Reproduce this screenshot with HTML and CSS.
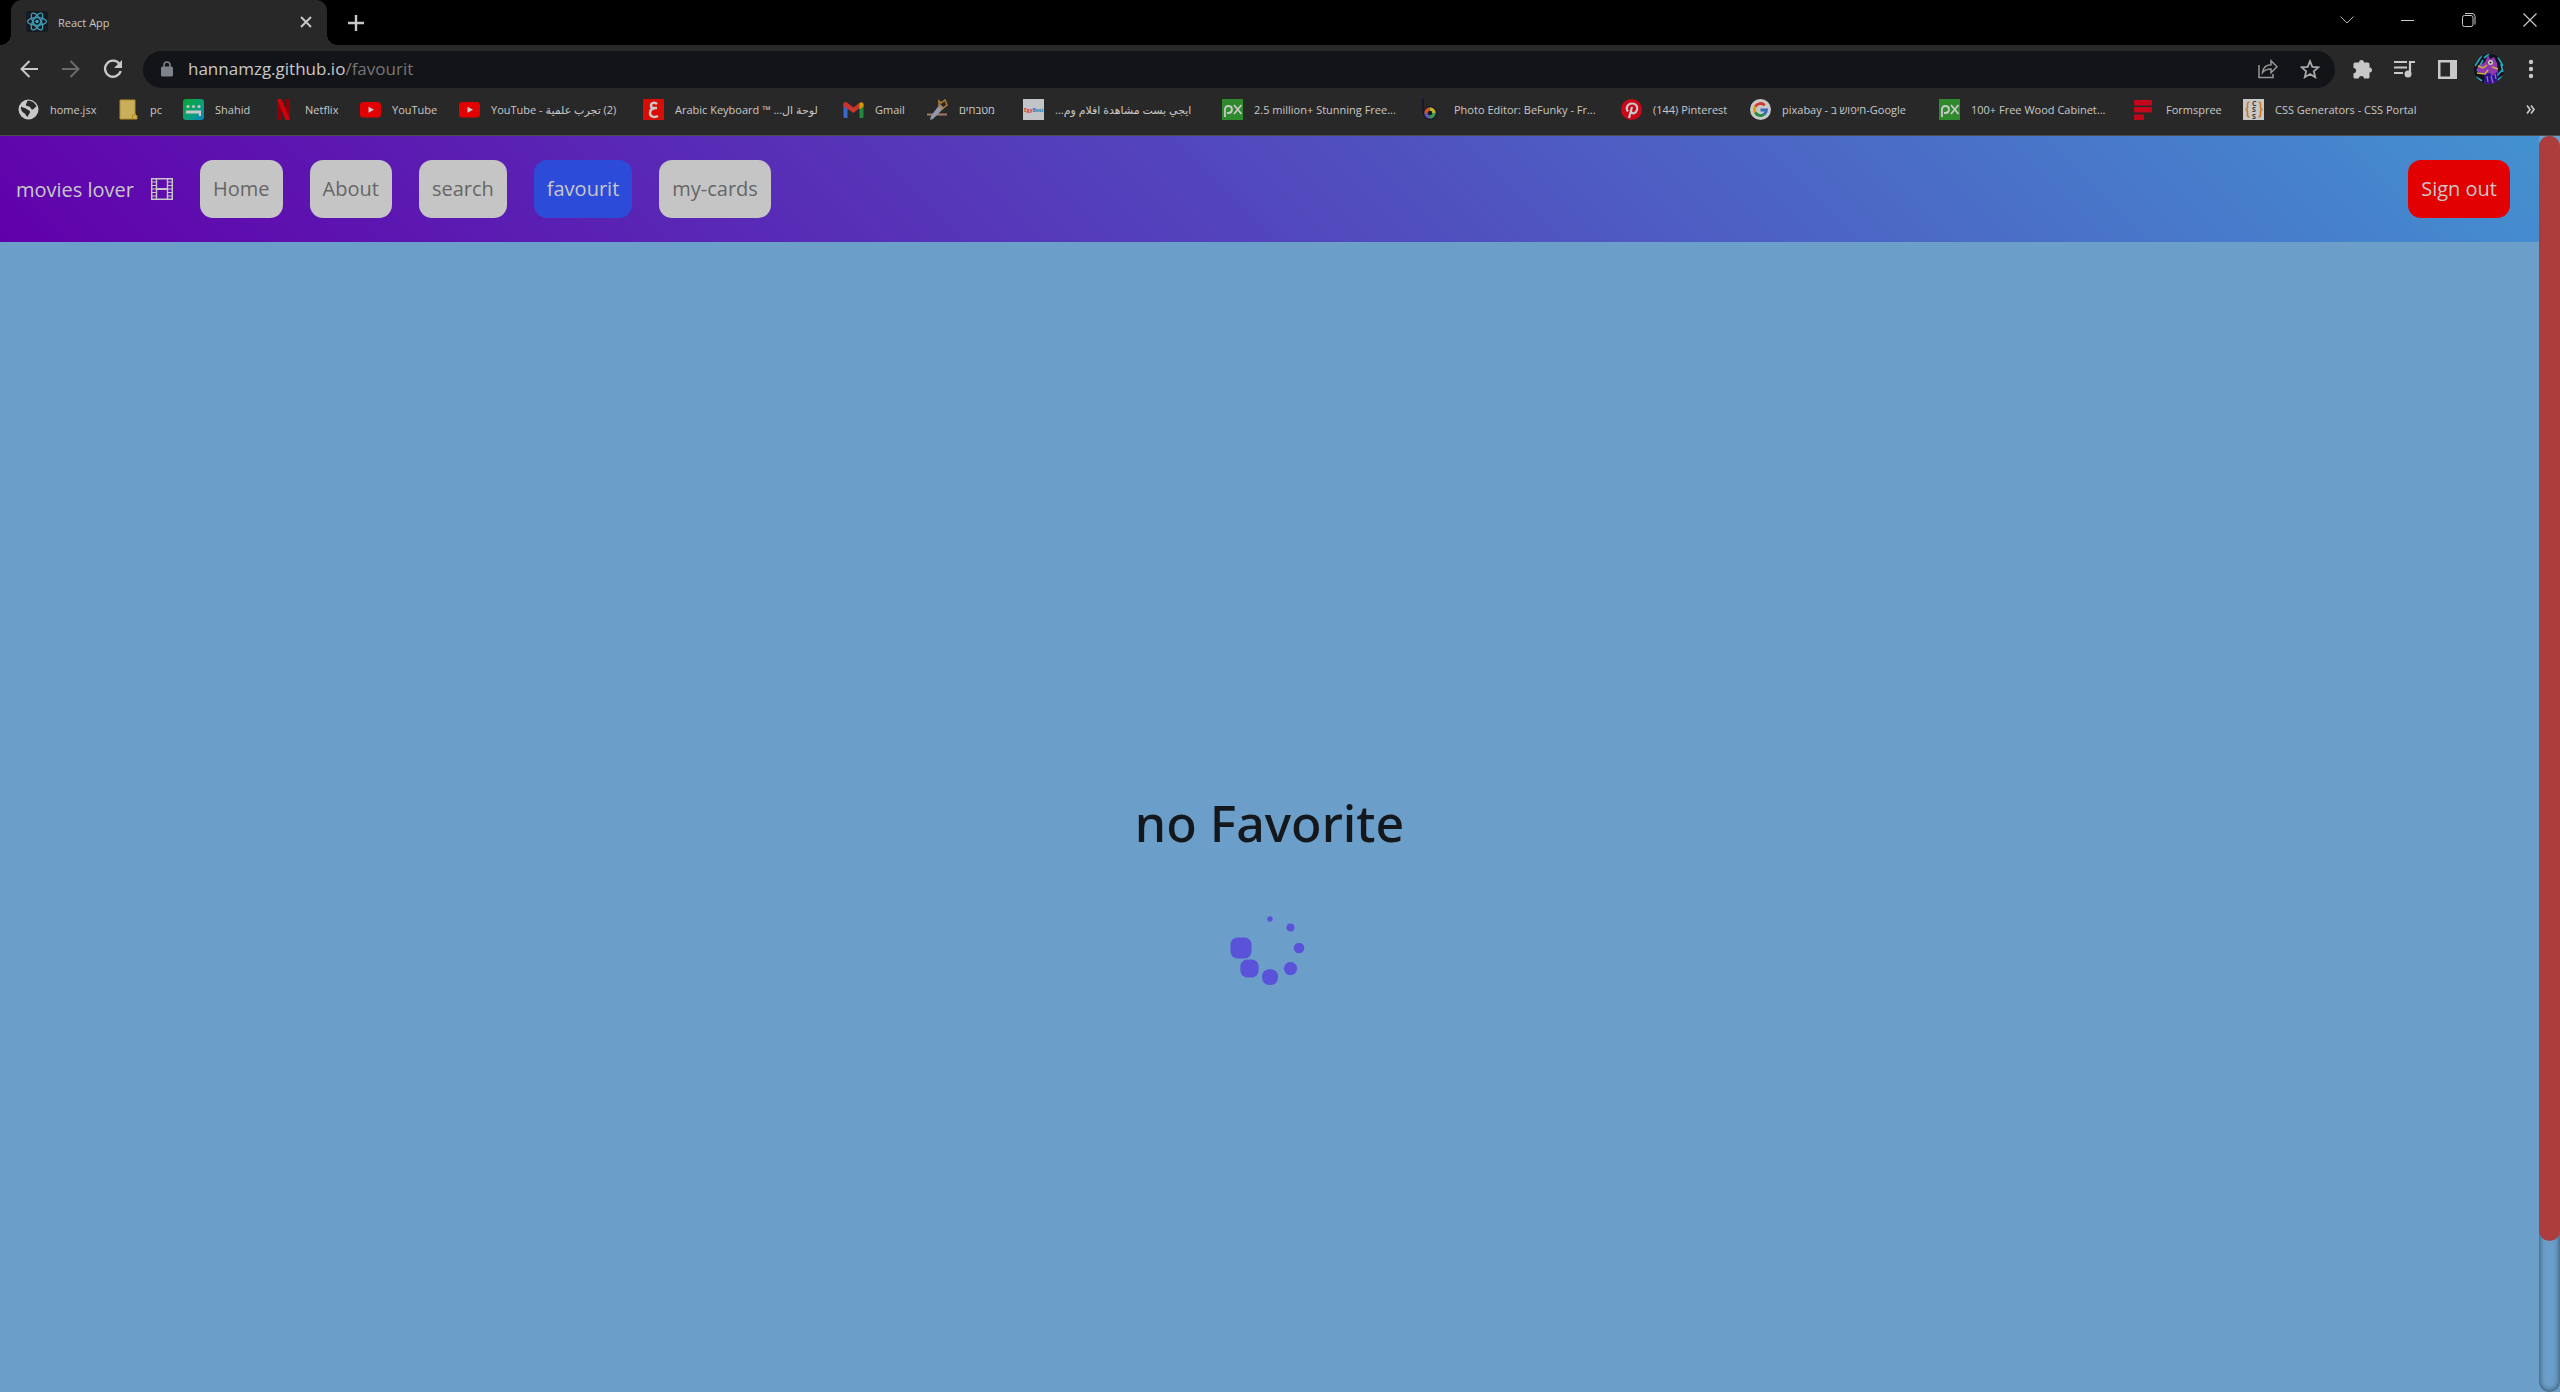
FILE: index.html
```html
<!DOCTYPE html>
<html lang="en">
<head>
<meta charset="utf-8">
<title>React App</title>
<link rel="stylesheet" href="styles.css">
</head>
<body>
<header class="browser">
  <div class="tabstrip">
    <div class="tab">
      <svg class="tab-icon" viewBox="0 0 22 22"><rect width="22" height="21" rx="2" fill="#171a1e"/><g fill="none" stroke="#3f9fbb" stroke-width="1.3"><ellipse cx="11" cy="10.5" rx="9.5" ry="3.8"/><ellipse cx="11" cy="10.5" rx="9.5" ry="3.8" transform="rotate(60 11 10.5)"/><ellipse cx="11" cy="10.5" rx="9.5" ry="3.8" transform="rotate(120 11 10.5)"/></g><circle cx="11" cy="10.5" r="1.8" fill="#3f9fbb"/></svg>
      <span class="tab-title">React App</span>
      <button class="icon-btn tab-close" aria-label="Close tab"><svg width="12" height="12" viewBox="0 0 12 12"><path d="M1 1l10 10M11 1L1 11" stroke="#c8c8c8" stroke-width="2"/></svg></button>
    </div>
    <button class="icon-btn new-tab" aria-label="New tab"><svg width="16" height="16" viewBox="0 0 16 16"><path d="M8 0v16M0 8h16" stroke="#c8c8c8" stroke-width="2.4"/></svg></button>
    <div class="window-controls">
      <button class="icon-btn" aria-label="Search tabs"><svg width="14" height="14" viewBox="0 0 14 14"><path d="M.5 3.500l6.500 6.500 6.500-6.500" fill="none" stroke="#b4b4b4"/></svg></button>
      <button class="icon-btn" aria-label="Minimize"><svg width="13" height="13" viewBox="0 0 13 13"><path d="M0 6.500h13" stroke="#c8c8c8"/></svg></button>
      <button class="icon-btn" aria-label="Restore"><svg width="14" height="14" viewBox="0 0 14 14"><g fill="none" stroke="#c8c8c8"><rect x=".5" y="2.500" width="10.500" height="11" rx="2"/><path d="M3 .5h7a3 3 0 0 1 3 3v8"/></g></svg></button>
      <button class="icon-btn" aria-label="Close"><svg width="14" height="14" viewBox="0 0 14 14"><path d="M.5.5l13 13M13.500.5l-13 13" stroke="#c8c8c8" stroke-width="1.200"/></svg></button>
    </div>
  </div>

  <div class="toolbar">
    <button class="icon-btn" aria-label="Back"><svg width="18" height="18" viewBox="0 0 18 18"><path d="M18 9H2M9.500 1L1.500 9l8 8" fill="none" stroke="#c8c8c8" stroke-width="2"/></svg></button>
    <button class="icon-btn" aria-label="Forward"><svg width="18" height="18" viewBox="0 0 18 18"><path d="M0 9h16M8.500 1l8 8-8 8" fill="none" stroke="#6b6b6b" stroke-width="2"/></svg></button>
    <button class="icon-btn" aria-label="Reload"><svg width="20" height="20" viewBox="0 0 20 20"><path d="M16.500 5A8 8 0 1 0 17.700 12" fill="none" stroke="#c8c8c8" stroke-width="2.300"/><path d="M19 1v8h-8z" fill="#c8c8c8"/></svg></button>
    <div class="omnibox">
      <svg class="lock" width="12" height="16" viewBox="0 0 12 16"><rect y="5.500" width="12" height="10" rx="1.500" fill="#7e828a"/><path d="M3 6.500V4a3 3 0 0 1 6 0v2.500" fill="none" stroke="#7e828a" stroke-width="1.600"/></svg>
      <div class="url" role="textbox" aria-label="Address" contenteditable="true" spellcheck="false">hannamzg.github.io<span class="url-path">/favourit</span></div>
      <button class="icon-btn" aria-label="Share"><svg width="20" height="20" viewBox="0 0 20 20"><g fill="none" stroke="#969696" stroke-width="1.500"><path d="M1 6v12.500h14V15"/><path d="M4.500 13.500c.5-4.500 3-7.500 8.500-7.800V1.800l6 6-6 6V10c-4 0-6.500 1-8.500 3.500z"/></g></svg></button>
      <button class="icon-btn" aria-label="Bookmark this page"><svg width="20" height="20" viewBox="0 0 20 20"><path d="M10 2.200l2.300 5.600 6 .5-4.500 4 1.400 5.900L10 15l-5.200 3.200 1.400-5.900-4.500-4 6-.5z" fill="none" stroke="#a8a8a8" stroke-width="1.800"/></svg></button>
    </div>
    <button class="icon-btn" aria-label="Extensions"><svg width="20" height="20" viewBox="0 0 20 20"><path d="M6 3.500a2.500 2.500 0 0 1 5 0h4a1.500 1.500 0 0 1 1.500 1.500v3.500a2.500 2.500 0 0 1 0 5V18a1.500 1.500 0 0 1-1.500 1.500h-4a2.600 2.600 0 0 0-5.200 0H2A1.500 1.500 0 0 1 .5 18v-3.800a2.600 2.600 0 0 0 0-5.200V5A1.500 1.500 0 0 1 2 3.500z" fill="#c8c8c8"/></svg></button>
    <button class="icon-btn" aria-label="Media controls"><svg width="22" height="18" viewBox="0 0 22 18"><path d="M0 2h13M0 7.500h13M0 13h9M16 14V2h5" fill="none" stroke="#c8c8c8" stroke-width="2.200"/><circle cx="14" cy="14" r="3.500" fill="#c8c8c8"/></svg></button>
    <button class="icon-btn" aria-label="Side panel"><svg width="19" height="19" viewBox="0 0 19 19"><path d="M0 0h19v19H0zM2.500 2.500v14H12v-14z" fill="#c8c8c8" fill-rule="evenodd"/></svg></button>
    <button class="icon-btn" aria-label="Profile"><svg width="30" height="30" viewBox="0 0 30 30"><defs><clipPath id="face"><circle cx="15" cy="15" r="15"/></clipPath></defs><g clip-path="url(#face)"><path fill="#101018" d="M0 0h30v30H0z"/><path d="M1 12L8 1M3 17L9 6M24 3l5 9M22 23l7-8M2 23l6 4M21 28l8-6M27 10l2 8M10 4l5-4" stroke="#28a6bd" stroke-width="1.800"/><path d="M10 30l2-10-9-2 1-5 7-5 3-7 2 4 4-2 3 6 1 9-3 12z" fill="#9137b2"/><path d="M11 30l-1-10 6-1 2 3 5-4 1 12z" fill="#2a148f"/><path d="M4 12l5 2 4-3M3 19l8 1 3-4M18 13l6 2" fill="none" stroke="#c9b43b" stroke-width="1.400"/><path d="M13 22l1 6M17 22l2 7M21 20l1 5" stroke="#b06ac8" stroke-width="1.200"/><circle cx="16.500" cy="8.500" r="2.500" fill="#d2d0b5"/><circle cx="16.500" cy="8.500" r="1" fill="#222"/></g></svg></button>
    <button class="icon-btn" aria-label="Menu"><svg width="6" height="20" viewBox="0 0 6 20"><g fill="#c8c8c8"><circle cx="3" cy="3" r="2.200"/><circle cx="3" cy="10" r="2.200"/><circle cx="3" cy="17" r="2.200"/></g></svg></button>
  </div>

  <nav class="bookmarks" aria-label="Bookmarks">
    <a href="#"><svg viewBox="0 0 21 21"><circle cx="10.500" cy="10.500" r="10" fill="#c8c8c8"/><path d="M3 7.500c2 1.500 4 1 5.500 2.500s3 1 3.500 2.500-2 3-2 5.500c-2-.5-2-3-4-4s-3.500-3.500-3-6.500zM9 2c4-1 8 1.500 9.500 5.500-2 1-3 3.500-4.500 3s-1-2.500-3-3-2.500 0-3-1.500S9.500 4 9 2z" fill="#282828"/></svg>home.jsx</a>
    <a href="#"><svg viewBox="0 0 21 21"><path d="M2 1h15v14l2 2v3H2z" fill="#c9ae5c" stroke="#b08e2c"/><path d="M14.500 20v-4h3" fill="none" stroke="#b58a1d"/></svg>pc</a>
    <a href="#"><svg viewBox="0 0 21 21"><defs><linearGradient id="sh" x1="0" y1="0" x2="1" y2="1"><stop offset="0" stop-color="#0aa52f"/><stop offset=".6" stop-color="#0b9f7a"/><stop offset="1" stop-color="#087ed0"/></linearGradient></defs><rect width="21" height="21" rx="3" fill="url(#sh)"/><g fill="#c8c8c8"><circle cx="5" cy="7.500" r="1.500"/><circle cx="10.500" cy="7.500" r="1.500"/><circle cx="16" cy="7.500" r="1.500"/><path d="M3 11.500h15V17h-2.200v-2.500H3z"/></g></svg>Shahid</a>
    <a href="#"><svg viewBox="0 0 21 21"><path d="M4 0h4v21H4zM13 0h4v21h-4z" fill="#900008"/><path d="M4 0h4.500L17 21h-4.500z" fill="#d0000c"/></svg>Netflix</a>
    <a href="#"><svg viewBox="0 0 21 21"><rect y="3" width="21" height="15.500" rx="3.500" fill="#e30000"/><path d="M8.500 7.800l5.500 3-5.500 3z" fill="#c8c8c8"/></svg>YouTube</a>
    <a href="#"><svg viewBox="0 0 21 21"><rect y="3" width="21" height="15.500" rx="3.500" fill="#e30000"/><path d="M8.500 7.800l5.500 3-5.500 3z" fill="#c8c8c8"/></svg><bdi dir="ltr">YouTube - تجرب علمية&lrm; (2)</bdi></a>
    <a href="#"><svg viewBox="0 0 21 21"><path fill="#d80d05" d="M0 0h21v21H0z"/><path d="M14 5c-2-2-6-1.500-6 1.500S10 9 14 9c-4 0-7 1.500-7 5s4 5 8 3" fill="none" stroke="#c8c8c8" stroke-width="2.500"/></svg><bdi dir="ltr">Arabic Keyboard ™ ...لوحة ال</bdi></a>
    <a href="#"><svg viewBox="0 0 21 21"><path d="M.5 5h4v14H2a1.500 1.500 0 0 1-1.500-1.500z" fill="#3769c8"/><path d="M16.500 5h4v12.500A1.500 1.500 0 0 1 19 19h-2.500z" fill="#23893f"/><path d="M.5 7V5c0-2 2-2.500 3.500-1.500l6.500 5 6.500-5v5L10.500 14 .5 7z" fill="#c9352a"/><path d="M16.500 4c1.500-1.500 4-.5 4 1.500v2l-4 3z" fill="#cf9a04"/></svg>Gmail</a>
    <a href="#"><svg viewBox="0 0 21 21"><path d="M0 15.500h20" stroke="#a87962" stroke-width="2"/><path d="M13 5l4 4L6 20l-3 1 1-4z" fill="#9297aa"/><path d="M12 2l2 2 4-3 2 5-5 4-3-4z" fill="none" stroke="#b67c32" stroke-width="1.500"/></svg>מטבחים</a>
    <a href="#"><svg viewBox="0 0 21 21"><path fill="#c2c4c8" d="M0 0h21v21H0z"/><text x="1" y="13" class="egy" fill="#d83a25">Egy<tspan fill="#2577b9">Best</tspan></text></svg><bdi dir="rtl">ايجي بست مشاهدة افلام وم...</bdi></a>
    <a href="#"><svg viewBox="0 0 21 21"><path fill="#2e8a2d" d="M0 0h21v21H0z"/><path d="M3 18V10a3.500 3.500 0 1 1 3.500 4H5M12 6l7.500 9M19.500 6L12 15" fill="none" stroke="#c8c8c8" stroke-width="1.800"/></svg>2.5 million+ Stunning Free...</a>
    <a href="#"><svg viewBox="0 0 21 21"><path d="M1 0v14" stroke="#12132a" stroke-width="1.500"/><circle cx="8" cy="14" r="7" fill="#17172c"/><g fill="none" stroke-width="3.500"><path d="M8 10a4 4 0 0 1 4 4" stroke="#b9b62d"/><path d="M12 14a4 4 0 0 1-4 4" stroke="#3f9850"/><path d="M8 18a4 4 0 0 1-4-4" stroke="#6758b1"/><path d="M4 14a4 4 0 0 1 4-4" stroke="#d0562b"/></g></svg>Photo Editor: BeFunky - Fr...</a>
    <a href="#"><svg viewBox="0 0 21 21"><circle cx="10.500" cy="10.500" r="10.500" fill="#cc0719"/><path d="M7 12.500c-3-4 0-8 4-8s6 3 5 6.500-5 4.500-6 1.500M11 8L8 19" fill="none" stroke="#c8c8c8" stroke-width="2.200"/></svg>(144) Pinterest</a>
    <a href="#"><svg viewBox="0 0 21 21"><circle cx="10.500" cy="10.500" r="10.500" fill="#c8c8c8"/><g fill="none" stroke-width="2.800"><path d="M14.800 6.300A6 6 0 0 0 5.300 7.500" stroke="#d13b2e"/><path d="M5.300 7.500a6 6 0 0 0 0 6" stroke="#d5a106"/><path d="M5.300 13.500a6 6 0 0 0 9 1.700" stroke="#238941"/><path d="M14.300 15.200a6 6 0 0 0 2.200-4.200h-6" stroke="#3569c4"/></g></svg><bdi dir="ltr">pixabay - חיפוש ב-Google</bdi></a>
    <a href="#"><svg viewBox="0 0 21 21"><path fill="#2e8a2d" d="M0 0h21v21H0z"/><path d="M3 18V10a3.500 3.500 0 1 1 3.500 4H5M12 6l7.500 9M19.500 6L12 15" fill="none" stroke="#c8c8c8" stroke-width="1.800"/></svg>100+ Free Wood Cabinet...</a>
    <a href="#"><svg viewBox="0 0 21 21"><g fill="#c4061b"><rect y="1" width="18" height="5.500" rx="1"/><rect y="8" width="18" height="5.500" rx="1"/><rect y="15.500" width="10" height="5.500" rx="1"/></g></svg>Formspree</a>
    <a href="#"><svg viewBox="0 0 21 21"><path fill="#c8c8c8" d="M0 0h21v21H0z"/><path d="M6.500 3C4 3 4.500 5 4.500 8c0 2-1 2.500-2 2.500 1 0 2 .5 2 2.500 0 3-.5 5 2 5M15.500 3c2.500 0 2 2 2 5 0 2 1 2.500 2 2.500-1 0-2 .5-2 2.500 0 3 .5 5-2 5" fill="none" stroke="#cf7a1d" stroke-width="1.600"/><g class="css-mark"><text x="9" y="6.500">C</text><text x="9" y="13">S</text><text x="9" y="19.500">S</text></g></svg>CSS Generators - CSS Portal</a>
    <button class="icon-btn more" aria-label="More bookmarks"><svg width="9" height="9" viewBox="0 0 9 9"><path d="M1 .5l3 4-3 4M5 .5l3 4-3 4" fill="none" stroke="#c8c8c8" stroke-width="1.700"/></svg></button>
  </nav>
</header>

<div class="viewport">
  <div class="page">
    <nav class="navbar" aria-label="Main">
      <a class="brand" href="#">movies lover
        <svg width="22" height="22" viewBox="0 0 22 22"><g fill="none" stroke="#c8c8c8"><path d="M.7.7h20.600v20.600H.7zM5.500 1v20M16.500 1v20" stroke-width="1.400"/><path d="M5.500 11h11" stroke-width="2"/><path d="M1 4h4.500M1 7.500h4.500M1 11h4.500M1 14.500h4.500M1 18h4.500M16.500 4H21M16.500 7.500H21M16.500 11H21M16.500 14.500H21M16.500 18H21" stroke-width="1.200"/></g></svg>
      </a>
      <a class="nav-link" href="#">Home</a>
      <a class="nav-link" href="#">About</a>
      <a class="nav-link" href="#">search</a>
      <a class="nav-link active" href="#" aria-current="page">favourit</a>
      <a class="nav-link" href="#">my-cards</a>
      <a class="nav-link sign-out" href="#">Sign out</a>
    </nav>
    <main class="empty">
      <h1>no Favorite</h1>
      <svg class="spinner" width="90" height="70" viewBox="-45 -35 90 70" role="img" aria-label="Loading"><g fill="#5a52d8"><circle cy="-29" r="2.700"/><circle cx="20.500" cy="-20.500" r="4"/><circle cx="29" r="5.300"/><circle cx="20.500" cy="20.500" r="6.600"/><rect x="-7.900" y="21.200" width="15.800" height="15.800" rx="7"/><rect x="-29.600" y="11.400" width="18.200" height="18.200" rx="7"/><rect x="-39.500" y="-10.500" width="21" height="21" rx="7"/></g></svg>
    </main>
  </div>
  <div class="scrollbar"><div class="thumb"></div></div>
</div>
</body>
</html>
```
FILE: styles.css
```css
* { box-sizing: border-box; }

body {
  margin: 0;
  min-height: 100vh;
  display: flex;
  flex-direction: column;
  background: #6b9fca;
  color: #c8c8c8;
  font-family: "Open Sans", "Noto Sans", "DejaVu Sans", sans-serif;
}

a { color: inherit; text-decoration: none; }
svg { display: block; flex: none; }

.icon-btn {
  display: flex;
  align-items: center;
  justify-content: center;
  flex: none;
  width: 42px;
  height: 36px;
  padding: 0;
  border: 0;
  background: none;
}

/* Browser frame */
.browser { background: #282828; border-bottom: 1px solid #4b4b4b; }

.tabstrip {
  display: flex;
  align-items: flex-start;
  height: 45px;
  padding-left: 11px;
  background: #000;
}

.tab {
  position: relative;
  display: flex;
  align-items: center;
  width: 316px;
  height: 45px;
  padding: 0 10px 1px 15px;
  border-radius: 11px 11px 0 0;
  background: #282828;
  font-size: 11px;
}

.tab::before,
.tab::after {
  content: "";
  position: absolute;
  bottom: 0;
  width: 11px;
  height: 11px;
}

.tab::before {
  left: -11px;
  background: radial-gradient(circle at 0 0, #000 11px, #282828 11px);
}

.tab::after {
  right: -11px;
  background: radial-gradient(circle at 100% 0, #000 11px, #282828 11px);
}

.tab-icon { width: 22px; height: 22px; }
.tab-title { flex: 1; padding-left: 10px; }
.tab-close { width: 22px; height: 22px; }
.new-tab { width: 58px; height: 45px; }

.window-controls { display: flex; margin-left: auto; }
.window-controls .icon-btn { width: 61px; height: 40px; }

.toolbar {
  display: flex;
  align-items: center;
  height: 48px;
  padding: 0 8px;
}

.omnibox {
  display: flex;
  align-items: center;
  flex: 1;
  height: 37px;
  margin: 0 7px 0 9px;
  padding: 0 4px 0 18px;
  border-radius: 19px;
  background: #131418;
}

.url { flex: 1; padding-left: 15px; font-size: 17px; line-height: 24px; }
.url-path { color: #767676; }

.bookmarks {
  display: grid;
  grid-template-columns:
    100px 65px 90px 87px 99px 184px 200px 84px 96px 199px
    200px 199px 129px 189px 195px 109px 1fr 42px;
  align-items: center;
  height: 42px;
  padding: 0 9px 10px 18px;
  font-size: 11px;
}

.bookmarks a {
  display: flex;
  align-items: center;
  gap: 11px;
  white-space: nowrap;
}

.bookmarks a svg { width: 21px; height: 21px; }
.egy { font-size: 5px; font-weight: 700; }
.css-mark { fill: #333; font-size: 7px; font-weight: 700; }
.bookmarks .more { height: 21px; }

/* Page */
.viewport { flex: 1; display: flex; }
.page { flex: 1; display: flex; flex-direction: column; }

.navbar {
  display: flex;
  align-items: center;
  gap: 27px;
  padding: 24px 29px 24px 16px;
  background: linear-gradient(45deg, #6100ab, #4391d0);
  font-size: 20px;
}

.brand { display: flex; align-items: center; gap: 17px; }

.nav-link {
  padding: 14px 13px;
  border-radius: 13px;
  background: #c5c5c5;
  color: #666;
  line-height: 30px;
}

.active { background: #2d4bd9; color: #c8c8c8; }
.sign-out { margin-left: auto; background: #e30000; color: #c8c8c8; }

.empty {
  flex: 1;
  display: flex;
  flex-direction: column;
  align-items: center;
  justify-content: center;
  gap: 60px;
  padding-top: 142px;
}

.empty h1 {
  margin: 0;
  color: #14181c;
  font-family: "Noto Sans", "Open Sans", sans-serif;
  font-size: 50px;
  font-weight: 500;
  line-height: 60px;
}

.spinner { overflow: visible; }

.scrollbar {
  width: 21px;
  border-radius: 11px;
  box-shadow: inset 0 0 6px rgba(0, 0, 0, 0.6);
}

.thumb { height: 88%; border-radius: 11px; background: #ad3d3d; }
```
